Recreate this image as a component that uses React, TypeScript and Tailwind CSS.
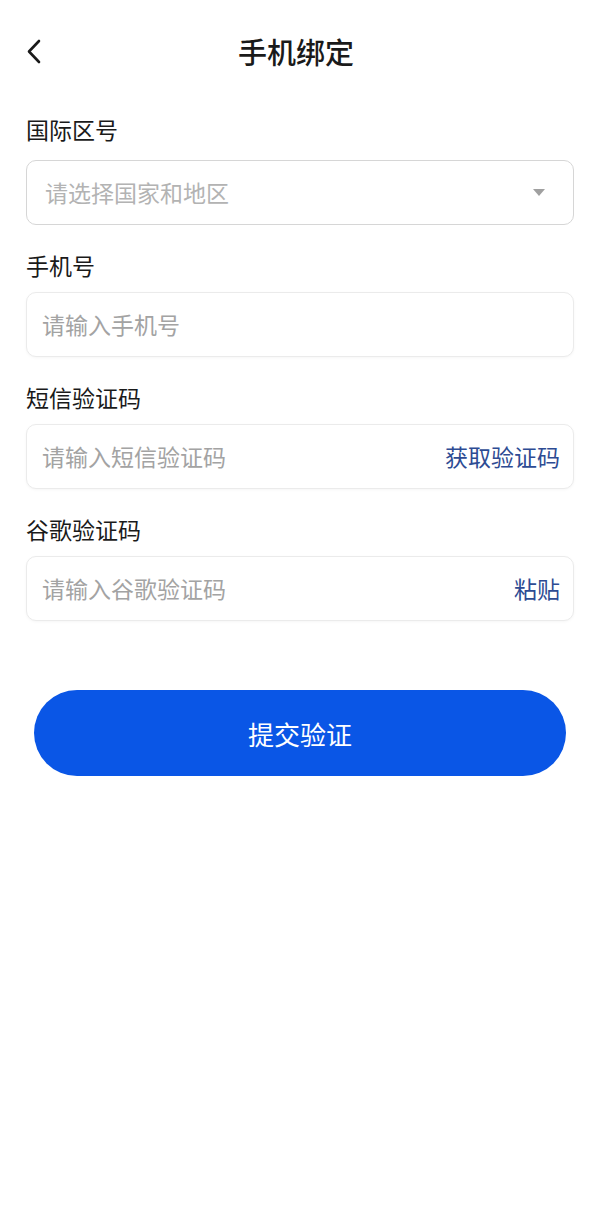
import { useState } from "react";

const font = "font-['Noto_Sans_CJK_SC','Noto_Sans',sans-serif]";

type FieldProps = {
  label: string;
  placeholder: string;
  action?: string;
};

function Campo({ label, placeholder, action }: FieldProps) {
  const [valor, setValor] = useState("");
  return (
    <div className="flex flex-col">
      <label className="text-[23px] leading-[32px] text-[#1a1a1a]">{label}</label>
      <div className="mt-[11px] flex h-[65px] items-center rounded-[10px] border border-[#ebebeb] bg-white pl-[15px] pr-[13px] shadow-[0_1px_3px_rgba(0,0,0,0.04)]">
        <input
          value={valor}
          onChange={(e) => setValor(e.target.value)}
          placeholder={placeholder}
          className="min-w-0 flex-1 bg-transparent text-[23px] text-[#333] outline-none placeholder:text-[#a3a3a3]"
        />
        {action && (
          <button className="shrink-0 text-[23px] text-[#2d4b93]">{action}</button>
        )}
      </div>
    </div>
  );
}

export default function App() {
  return (
    <div className={`${font} min-h-[1218px] w-full bg-white`}>
      <header className="relative flex h-[104px] items-center justify-center">
        <button className="absolute left-[22px] top-[35px] p-[4px]">
          <svg width="16" height="26" viewBox="0 0 16 26" fill="none">
            <path
              d="M13 2 L3 12.5 L13 23"
              stroke="#1a1a1a"
              strokeWidth="2.6"
              strokeLinecap="round"
              strokeLinejoin="round"
            />
          </svg>
        </button>
        <h1 className="mr-[8px] text-[29px] font-medium text-[#1a1a1a]">手机绑定</h1>
      </header>

      <main className="flex flex-col gap-[24px] px-[26px] pt-[9px]">
        <div className="flex flex-col">
          <label className="text-[23px] leading-[32px] text-[#1a1a1a]">国际区号</label>
          <button className="mt-[15px] flex h-[65px] items-center justify-between rounded-[10px] border border-[#d6d6d6] bg-white pl-[18px] pr-[27px]">
            <span className="text-[23px] text-[#b3b3b3]">请选择国家和地区</span>
            <svg width="14" height="9" viewBox="0 0 14 9">
              <path d="M1 1 L13 1 L7 8 Z" fill="#a0a0a0" />
            </svg>
          </button>
        </div>
        <Campo label="手机号" placeholder="请输入手机号" />
        <Campo label="短信验证码" placeholder="请输入短信验证码" action="获取验证码" />
        <Campo label="谷歌验证码" placeholder="请输入谷歌验证码" action="粘贴" />
      </main>

      <div className="mt-[69px] px-[34px]">
        <button className="flex h-[86px] w-full items-center justify-center rounded-full bg-[#0a56e6] text-[26px] text-white">
          提交验证
        </button>
      </div>
    </div>
  );
}
